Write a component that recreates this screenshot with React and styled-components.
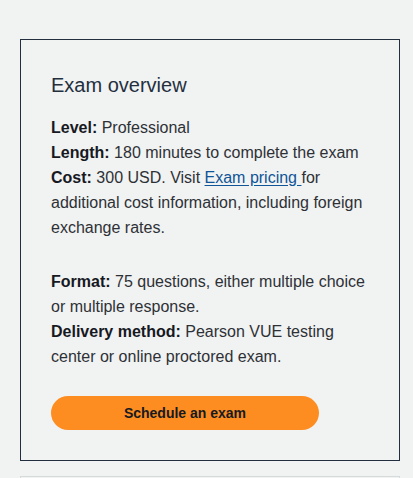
import styled, { createGlobalStyle } from 'styled-components';

const GlobalStyle = createGlobalStyle`
  body {
    margin: 0;
    background: #f1f2f2;
    font-family: "Liberation Sans", Arial, sans-serif;
    color: #232f3e;
  }
`;

const Page = styled.main`
  padding: 39px 0 0 20px;
  display: flex;
  flex-direction: column;
  gap: 15px;
`;

const Card = styled.section`
  width: 380px;
  box-sizing: border-box;
  border: 1px solid ${(p) => (p.$muted ? '#d5dbdb' : '#232f3e')};
  padding: ${(p) => (p.$muted ? '0' : '32px 30px 30px')};
  min-height: ${(p) => (p.$muted ? '40px' : 'auto')};
`;

const Title = styled.h2`
  margin: 0 0 17px;
  font-size: 20px;
  line-height: 26px;
  font-weight: 400;
  color: #232f3e;
`;

const Para = styled.p`
  margin: 0 0 29px;
  font-size: 16px;
  line-height: 25px;
  color: #2d3136;

  strong {
    color: #16191f;
    font-weight: 700;
  }
`;

const Link = styled.a`
  color: #0f5597;
  text-decoration: underline;
  text-underline-offset: 2px;
`;

const Button = styled.button`
  display: block;
  width: 268px;
  height: 34px;
  margin-top: -2px;
  border: none;
  border-radius: 17px;
  background: #fd8d21;
  color: #16191f;
  font-family: inherit;
  font-size: 14px;
  font-weight: 700;
  cursor: pointer;
`;

export default function App() {
  return (
    <>
      <GlobalStyle />
      <Page>
        <Card>
          <Title>Exam overview</Title>
          <Para>
            <strong>Level:</strong> Professional
            <br />
            <strong>Length:</strong> 180 minutes to complete the exam
            <br />
            <strong>Cost:</strong> 300 USD. Visit <Link href="#">Exam pricing </Link>for
            additional cost information, including foreign exchange rates.
          </Para>
          <Para>
            <strong>Format:</strong> 75 questions, either multiple choice or multiple
            response.
            <br />
            <strong>Delivery method:</strong> Pearson VUE testing center or online
            proctored exam.
          </Para>
          <Button type="button">Schedule an exam</Button>
        </Card>
        <Card $muted />
      </Page>
    </>
  );
}
